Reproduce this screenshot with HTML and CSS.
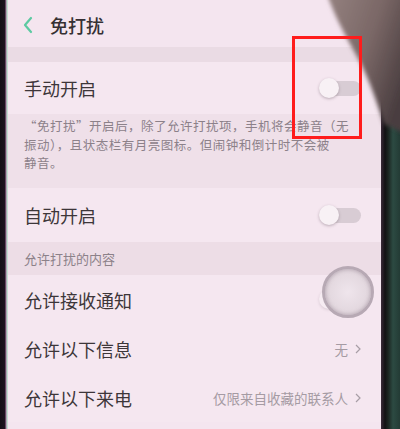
FILE: index.html
```html
<!DOCTYPE html>
<html lang="zh-CN">
<head>
    <meta charset="UTF-8">
    <meta name="viewport" content="width=device-width, initial-scale=1.0">
    <title>免打扰</title>
    <link rel="stylesheet" href="styles.css">
</head>
<body>
    <div class="phone">
        <div class="edge-left"></div>
        <div class="screen">
            <div class="topbar">
                <svg class="back" width="12" height="18" viewBox="0 0 12 18">
                    <polyline points="9,2 3,9 9,16" fill="none" stroke="#5ccaa2" stroke-width="2.2" stroke-linecap="round" stroke-linejoin="round"/>
                </svg>
                <span class="title">免打扰</span>
            </div>
            <div class="gap"></div>
            <div class="row row-first">
                <span class="label">手动开启</span>
                <span class="switch"></span>
            </div>
            <div class="note">
                <p>“免打扰”开启后，除了允许打扰项，手机将会静音（无<br>振动），且状态栏有月亮图标。但闹钟和倒计时不会被<br>静音。</p>
            </div>
            <div class="row row-auto">
                <span class="label">自动开启</span>
                <span class="switch"></span>
            </div>
            <div class="section">允许打扰的内容</div>
            <div class="row">
                <span class="label">允许接收通知</span>
                <span class="switch faint"></span>
            </div>
            <div class="row">
                <span class="label">允许以下信息</span>
                <span class="value">无
                    <svg width="6" height="10" viewBox="0 0 6 10"><polyline points="1,1 5,5 1,9" fill="none" stroke="#a89ea6" stroke-width="1.2"/></svg>
                </span>
            </div>
            <div class="row">
                <span class="label">允许以下来电</span>
                <span class="value">仅限来自收藏的联系人
                    <svg width="6" height="10" viewBox="0 0 6 10"><polyline points="1,1 5,5 1,9" fill="none" stroke="#a89ea6" stroke-width="1.2"/></svg>
                </span>
            </div>
        </div>
        <div class="bezel"></div>

        <svg class="finger" width="100" height="150" viewBox="0 0 100 150">
            <defs>
                <linearGradient id="skin" x1="0" y1="0" x2="1" y2="0.6">
                    <stop offset="0" stop-color="#958280"/>
                    <stop offset="0.55" stop-color="#7a6766"/>
                    <stop offset="1" stop-color="#4a3e40"/>
                </linearGradient>
                <filter id="soft"><feGaussianBlur stdDeviation="2"/></filter>
            </defs>
            <path d="M27 -6 C36 20 48 40 60 62 C70 82 76 100 84 124 L106 134 L106 -6 Z" fill="url(#skin)" filter="url(#soft)"/>
        </svg>
        <div class="mark"></div>
        <div class="touch"></div>
    </div>
</body>
</html>
```

FILE: styles.css
```css
body {
    margin: 0;
    padding: 0;
    background: #1c1a1e;
    font-family: "Noto Sans CJK SC", "Noto Sans", sans-serif;
}
.phone {
    position: relative;
    display: flex;
    width: 400px;
    height: 429px;
    overflow: hidden;
}
.edge-left {
    width: 8px;
    background: linear-gradient(to right, #141016 0, #1d1420 5px, #b67aa8 6px, #9ad8b8 7px, #efe0ea 8px);
}
.screen {
    width: 373px;
    background: #f4e5ef;
    display: flex;
    flex-direction: column;
}
.bezel {
    flex: 1;
    background: linear-gradient(to right, #3b2b39 0, #121113 4px, #1b2420 7px, #2c4a42 12px, #233b35 19px);
}
.topbar {
    height: 47px;
    display: flex;
    align-items: center;
    padding-left: 14px;
    background: #f4e5ef;
    box-sizing: border-box;
    padding-top: 3px;
}
.back {
    margin-right: 16px;
}
.title {
    font-size: 18px;
    font-weight: 500;
    color: #353033;
}
.gap {
    height: 15px;
    background: #eadbe4;
}
.row {
    height: 49px;
    display: flex;
    align-items: center;
    justify-content: space-between;
    padding: 0 20px 0 16px;
    background: #f5e7f0;
}
.row-first {
    height: 52px;
}
.row-auto {
    height: 54px;
}
.label {
    font-size: 18px;
    color: #3d3639;
}
.switch {
    position: relative;
    width: 40px;
    height: 15px;
    border-radius: 8px;
    background: #d8ccd4;
}
.switch::before {
    content: "";
    position: absolute;
    left: -2px;
    top: -3px;
    width: 20px;
    height: 20px;
    border-radius: 50%;
    background: #f8f1f5;
    box-shadow: 0 1px 3px rgba(80, 60, 75, 0.35);
}
.switch.faint {
    opacity: 0.5;
}
.note {
    height: 74px;
    background: #efe0e9;
    padding: 3px 6px 0 16px;
    box-sizing: border-box;
}
.note p {
    margin: 0;
    font-size: 12.5px;
    line-height: 18.5px;
    letter-spacing: 0.5px;
    color: #8c8189;
    white-space: nowrap;
}
.section {
    height: 33px;
    display: flex;
    align-items: center;
    padding-left: 16px;
    background: #eddde6;
    font-size: 13px;
    color: #8c8189;
}
.value {
    display: flex;
    align-items: center;
    gap: 7px;
    font-size: 13.5px;
    color: #a59ba3;
}
.finger {
    position: absolute;
    top: 0;
    left: 300px;
}
.mark {
    position: absolute;
    left: 292px;
    top: 36px;
    width: 64px;
    height: 97px;
    border: 3px solid #ff1c1c;
}
.touch {
    position: absolute;
    left: 322px;
    top: 266px;
    width: 46px;
    height: 46px;
    border-radius: 50%;
    border: 3px solid #b7a9b4;
    background: radial-gradient(circle, #efe5ec 0, #e3d8df 60%, #d2c5ce 100%);
    box-shadow: inset 0 0 4px rgba(90, 70, 85, 0.35);
}
```
